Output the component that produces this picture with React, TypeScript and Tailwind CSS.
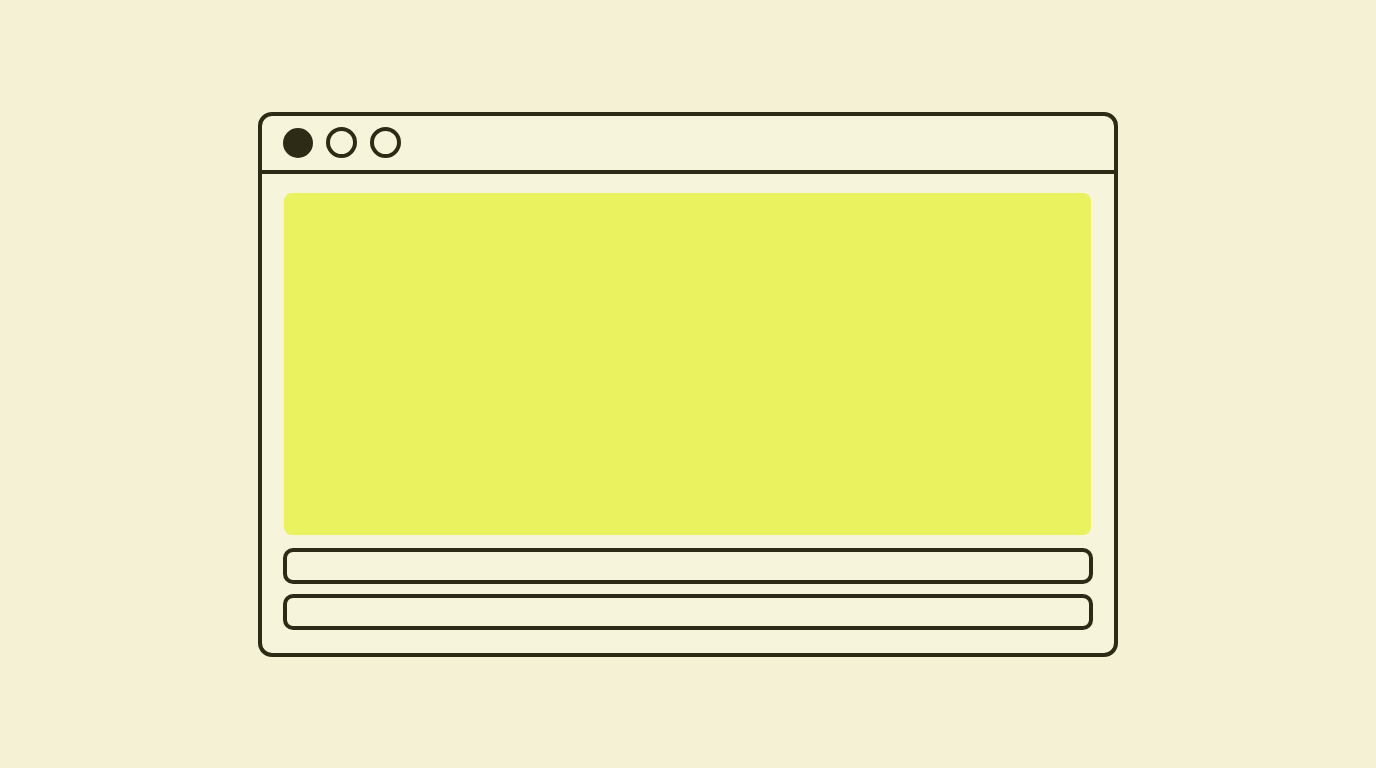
export default function App() {
  return (
    <div className="flex h-screen w-full items-center justify-center bg-[#f4f1d4]">
      <div className="flex h-[545px] w-[860px] flex-col rounded-[14px] border-4 border-[#2d2b15] bg-[#f6f4da]">
        <div className="flex h-[58px] shrink-0 items-center gap-[13px] border-b-4 border-[#2d2b15] pl-[21px]">
          <span className="h-[30px] w-[30px] rounded-full bg-[#2d2b15]" />
          <span className="h-[31px] w-[31px] rounded-full border-4 border-[#2d2b15]" />
          <span className="h-[31px] w-[31px] rounded-full border-4 border-[#2d2b15]" />
        </div>
        <div className="flex flex-1 flex-col px-[21px] pt-[19px] pb-[23px]">
          <div className="ml-px mr-[2px] h-[342px] shrink-0 rounded-[8px] bg-[#eaf25f]" />
          <div className="mt-[13px] h-[36px] shrink-0 rounded-[10px] border-4 border-[#2d2b15]" />
          <div className="mt-[10px] h-[36px] shrink-0 rounded-[10px] border-4 border-[#2d2b15]" />
        </div>
      </div>
    </div>
  );
}
